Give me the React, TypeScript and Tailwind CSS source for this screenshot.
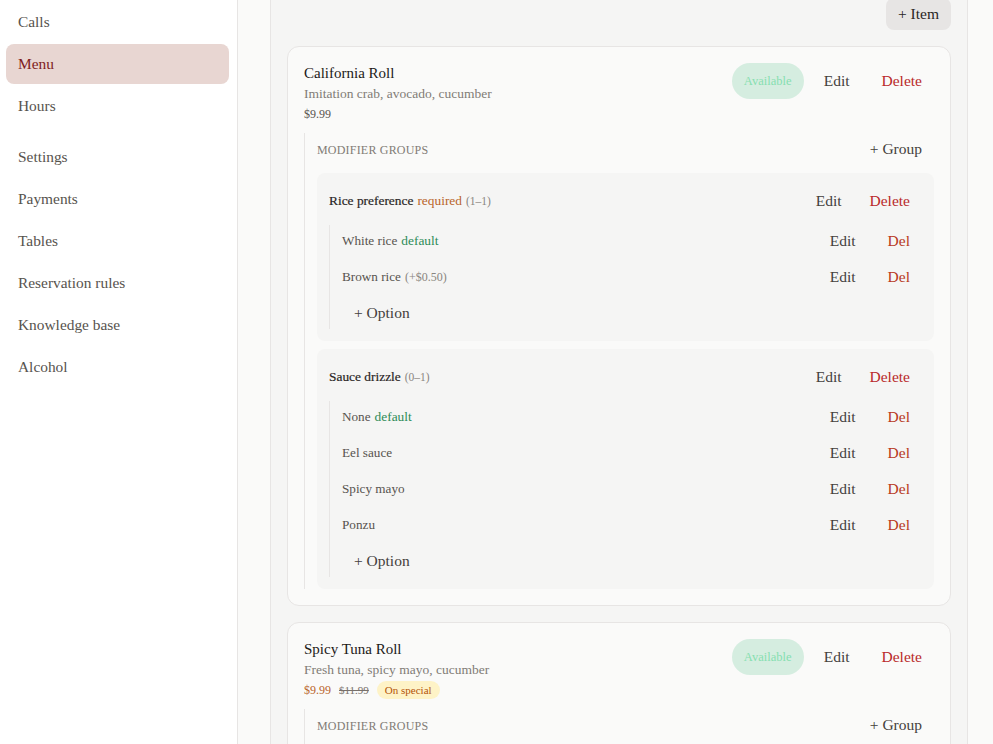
const serif = "font-['Liberation_Serif',serif]"

const navTop = ["Calls", "Menu", "Hours"]
const navBottom = ["Settings", "Payments", "Tables", "Reservation rules", "Knowledge base", "Alcohol"]

function NavItem({ label, active }: { label: string; active?: boolean }) {
  return (
    <div
      className={
        active
          ? "h-10 rounded-lg bg-[#e8d6d2] px-3 flex items-center text-[15.4px] text-[#7f1d1d]"
          : "h-10 rounded-lg px-3 flex items-center text-[15.4px] text-[#57534e]"
      }
    >
      {label}
    </div>
  )
}

function Btn({ label, color, small }: { label: string; color?: string; small?: boolean }) {
  return (
    <button
      className={
        (small ? "h-8 " : "h-9 ") +
        "px-3 rounded-lg text-[15.5px] " +
        (color === "delete" ? "text-[#b92a2a]" : color === "del" ? "text-[#b83a1c]" : "text-[#44403c]")
      }
    >
      {label}
    </button>
  )
}

type Option = { name: string; extra?: string; isDefault?: boolean }
type Group = { name: string; required?: boolean; range: string; options: Option[] }

const groups: Group[] = [
  {
    name: "Rice preference",
    required: true,
    range: "(1–1)",
    options: [{ name: "White rice", isDefault: true }, { name: "Brown rice", extra: "(+$0.50)" }],
  },
  {
    name: "Sauce drizzle",
    range: "(0–1)",
    options: [{ name: "None", isDefault: true }, { name: "Eel sauce" }, { name: "Spicy mayo" }, { name: "Ponzu" }],
  },
]

function ModifierGroup({ group }: { group: Group }) {
  return (
    <div className="rounded-lg bg-[#f5f5f4] p-3">
      <div className="h-8 flex items-center justify-between">
        <div className="text-[13.4px] text-[#292524]">
          <span className="[-webkit-text-stroke:0.2px_#292524]">{group.name}</span>
          {group.required && <span className="ml-1 text-[#b9652b]">required</span>}
          <span className="ml-1 text-[11.5px] text-[#8a8580]">{group.range}</span>
        </div>
        <div className="flex gap-1">
          <Btn label="Edit" small />
          <Btn label="Delete" color="delete" small />
        </div>
      </div>
      <div className="mt-2 border-l border-[#e7e5e4] pl-3 flex flex-col gap-1">
        {group.options.map((o) => (
          <div key={o.name} className="h-8 flex items-center justify-between">
            <div className="text-[13.2px] text-[#57534e]">
              {o.name}
              {o.extra && <span className="ml-1 text-[12px] text-[#8a8580]">{o.extra}</span>}
              {o.isDefault && <span className="ml-1 text-[13.4px] text-[#2e8b57]">default</span>}
            </div>
            <div className="flex gap-2">
              <Btn label="Edit" small />
              <Btn label="Del" color="del" small />
            </div>
          </div>
        ))}
        <div className="h-8 flex items-center">
          <Btn label="+ Option" small />
        </div>
      </div>
    </div>
  )
}

function ItemCard({
  name,
  desc,
  special,
  items,
}: {
  name: string
  desc: string
  special?: boolean
  items: Group[]
}) {
  return (
    <div className="rounded-xl border border-[#e7e5e4] bg-[#fafaf9] p-4">
      <div className="flex justify-between">
        <div>
          <div className="text-[15px] leading-5 text-[#1c1917]">{name}</div>
          <div className="mt-px text-[13.5px] leading-5 text-[#817c76]">{desc}</div>
          {special ? (
            <div className="flex items-center h-5 text-[12px]">
              <span className="text-[#b9652b]">$9.99</span>
              <span className="ml-2 text-[11px] text-[#78716c] line-through">$11.99</span>
              <span className="ml-2 h-[18px] px-2 rounded-full bg-[#fef3c7] text-[#b45309] text-[11px] leading-[18px]">
                On special
              </span>
            </div>
          ) : (
            <div className="h-5 flex items-center text-[12px] text-[#57534e]">$9.99</div>
          )}
        </div>
        <div className="flex gap-2">
          <span className="h-9 w-[72px] rounded-full bg-[#d5ede0] flex items-center justify-center text-[12.5px] text-[#86dfb0]">
            Available
          </span>
          <Btn label="Edit" />
          <Btn label="Delete" color="delete" />
        </div>
      </div>
      <div className="mt-[9px] min-h-12 border-l border-[#e7e5e4] pl-3 flex flex-col gap-2">
        <div className="h-8 flex items-center justify-between">
          <span className="pt-px text-[12px] uppercase tracking-[0.2px] text-[#817c76]">Modifier groups</span>
          <Btn label="+ Group" small />
        </div>
        {items.map((g) => (
          <ModifierGroup key={g.name} group={g} />
        ))}
      </div>
    </div>
  )
}

export default function App() {
  return (
    <div className={"h-[744px] w-[993px] overflow-hidden flex bg-[#fafaf9] " + serif}>
      <aside className="w-[238px] shrink-0 bg-white border-r border-[#e7e5e4] pl-[6px] pr-2 pt-[2px]">
        <nav className="flex flex-col gap-[2px]">
          {navTop.map((n) => (
            <NavItem key={n} label={n} active={n === "Menu"} />
          ))}
        </nav>
        <nav className="mt-[11px] flex flex-col gap-[2px]">
          {navBottom.map((n) => (
            <NavItem key={n} label={n} />
          ))}
        </nav>
      </aside>
      <main className="flex-1 pl-8 pr-[25px]">
        <div className="-mt-[2px] border-x border-[#e7e5e4] bg-[#f5f5f4] px-4">
          <div className="flex justify-end mb-4">
            <button className="h-8 px-3 rounded-lg bg-[#e7e5e4] text-[15.5px] text-[#292524]">+ Item</button>
          </div>
          <div className="flex flex-col gap-4">
            <ItemCard name="California Roll" desc="Imitation crab, avocado, cucumber" items={groups} />
            <ItemCard name="Spicy Tuna Roll" desc="Fresh tuna, spicy mayo, cucumber" special items={[]} />
          </div>
        </div>
      </main>
    </div>
  )
}
